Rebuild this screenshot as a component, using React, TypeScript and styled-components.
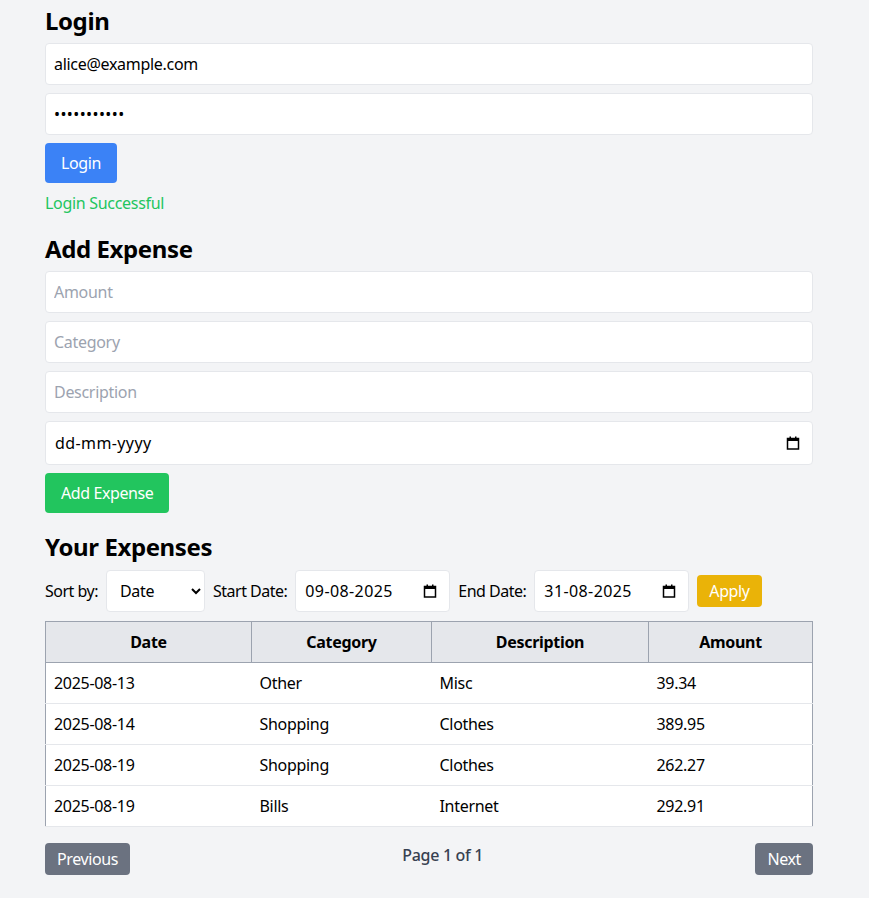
import React from "react";
import styled, { createGlobalStyle } from "styled-components";

const GlobalStyle = createGlobalStyle`
  * { box-sizing: border-box; }
  body {
    margin: 0;
    background: #f3f4f6;
    font-family: "Segoe UI", "Noto Sans", "Open Sans", sans-serif;
    letter-spacing: -0.3px;
    color: #000;
  }
`;

const Page = styled.div`
  width: 768px;
  margin: 0 0 0 45px;
  padding: 3px 0 23px;
  display: flex;
  flex-direction: column;
  gap: 16px;
`;

const Section = styled.section`
  display: flex;
  flex-direction: column;
`;

const Heading = styled.h2`
  margin: 0 0 6px;
  padding-top: 2px;
  font-size: 24px;
  line-height: 32px;
  font-weight: 700;
  letter-spacing: -0.4px;
`;

const Stack = styled.div`
  display: flex;
  flex-direction: column;
  gap: 8px;
`;

const TextInput = styled.input`
  width: 100%;
  height: 42px;
  padding: 8px;
  font: inherit;
  font-size: 16px;
  line-height: 24px;
  letter-spacing: -0.3px;
  border: 1px solid #e5e7eb;
  border-radius: 4px;
  background: #fff;
  color: #000;
  outline: none;
  &::placeholder { color: #9ca3af; }
  &[type="password"] { letter-spacing: 0.4px; }
`;

const DateBox = styled.label<{ $w?: number; $h?: number }>`
  display: flex;
  align-items: center;
  width: ${(p) => (p.$w ? `${p.$w}px` : "100%")};
  height: ${(p) => p.$h ?? 44}px;
  padding: 0 12px 0 9px;
  border: 1px solid #e5e7eb;
  border-radius: 4px;
  background: #fff;
  flex-shrink: 0;
`;

const DateText = styled.input`
  flex: 1;
  min-width: 0;
  border: none;
  outline: none;
  padding: 0;
  font: inherit;
  font-size: 16px;
  letter-spacing: 0.4px;
  color: #000;
  background: transparent;
`;

const Button = styled.button<{ $bg: string; $px?: number; $py?: number }>`
  align-self: flex-start;
  background: ${(p) => p.$bg};
  color: #fff;
  border: none;
  border-radius: 4px;
  padding: ${(p) => p.$py ?? 8}px ${(p) => p.$px ?? 16}px;
  font: inherit;
  font-size: 16px;
  line-height: 24px;
  letter-spacing: -0.4px;
  cursor: pointer;
`;

const Message = styled.p`
  margin: 8px 0 0;
  color: #22c55e;
  font-size: 16px;
  line-height: 24px;
`;

const FilterRow = styled.div`
  display: flex;
  align-items: center;
  gap: 8px;
  margin-bottom: 8px;
  height: 44px;
`;

const Label = styled.span`
  font-size: 16px;
  line-height: 24px;
  letter-spacing: -0.5px;
  white-space: nowrap;
`;

const Select = styled.select`
  width: 99px;
  height: 42px;
  padding: 8px 8px 8px 9px;
  font: inherit;
  font-size: 16px;
  letter-spacing: -0.3px;
  border: 1px solid #e5e7eb;
  border-radius: 4px;
  background: #fff;
  color: #000;
  outline: none;
`;

const Table = styled.table`
  width: 767px;
  table-layout: fixed;
  border-collapse: collapse;
  border: 1px solid #9ca3af;
  background: #fff;
  font-size: 16px;
  line-height: 24px;
`;

const Th = styled.th`
  background: #e5e7eb;
  border: 1px solid #9ca3af;
  padding: 8px;
  font-weight: 700;
  text-align: center;
`;

const Tr = styled.tr`
  border-bottom: 1px solid #e5e7eb;
`;

const Td = styled.td`
  padding: 8px;
  text-align: left;
`;

const Pagination = styled.div`
  display: flex;
  justify-content: space-between;
  margin-top: 16px;
`;

const PageInfo = styled.span`
  color: #374151;
  font-weight: 500;
  font-size: 16px;
  line-height: 24px;
`;

const CalendarIcon = () => (
  <svg width="14" height="14" viewBox="0 0 14 14" aria-hidden="true">
    <rect x="1.5" y="2.5" width="11" height="10.5" fill="none" stroke="#000" strokeWidth="1.5" />
    <rect x="1.5" y="2.5" width="11" height="2.5" fill="#000" />
    <rect x="3.5" y="0.5" width="1.5" height="2.5" fill="#000" />
    <rect x="9" y="0.5" width="1.5" height="2.5" fill="#000" />
  </svg>
);

const DateField = ({ value, w, h }: { value: string; w?: number; h?: number }) => (
  <DateBox $w={w} $h={h}>
    <DateText type="text" defaultValue={value} readOnly />
    <CalendarIcon />
  </DateBox>
);

const expenses = [
  { date: "2025-08-13", category: "Other", description: "Misc", amount: "39.34" },
  { date: "2025-08-14", category: "Shopping", description: "Clothes", amount: "389.95" },
  { date: "2025-08-19", category: "Shopping", description: "Clothes", amount: "262.27" },
  { date: "2025-08-19", category: "Bills", description: "Internet", amount: "292.91" },
];

export default function App() {
  return (
    <>
      <GlobalStyle />
      <Page>
        <Section>
          <Heading>Login</Heading>
          <Stack>
            <TextInput type="email" defaultValue="alice@example.com" />
            <TextInput type="password" defaultValue="password123" />
            <Button $bg="#3b82f6">Login</Button>
          </Stack>
          <Message>Login Successful</Message>
        </Section>

        <Section>
          <Heading>Add Expense</Heading>
          <Stack>
            <TextInput placeholder="Amount" />
            <TextInput placeholder="Category" />
            <TextInput placeholder="Description" />
            <DateField value="dd-mm-yyyy" />
            <Button $bg="#22c55e">Add Expense</Button>
          </Stack>
        </Section>

        <Section>
          <Heading>Your Expenses</Heading>
          <FilterRow>
            <Label>Sort by:</Label>
            <Select defaultValue="date">
              <option value="date">Date</option>
              <option value="amount">Amount</option>
              <option value="category">Category</option>
            </Select>
            <Label>Start Date:</Label>
            <DateField value="09-08-2025" w={155} h={42} />
            <Label>End Date:</Label>
            <DateField value="31-08-2025" w={155} h={42} />
            <Button $bg="#eab308" $px={12} $py={4} style={{ alignSelf: "center" }}>
              Apply
            </Button>
          </FilterRow>
          <Table>
            <colgroup>
              <col style={{ width: 206 }} />
              <col style={{ width: 180 }} />
              <col style={{ width: 217 }} />
              <col style={{ width: 164 }} />
            </colgroup>
            <thead>
              <tr>
                <Th>Date</Th>
                <Th>Category</Th>
                <Th>Description</Th>
                <Th>Amount</Th>
              </tr>
            </thead>
            <tbody>
              {expenses.map((e, i) => (
                <Tr key={i}>
                  <Td>{e.date}</Td>
                  <Td>{e.category}</Td>
                  <Td>{e.description}</Td>
                  <Td>{e.amount}</Td>
                </Tr>
              ))}
            </tbody>
          </Table>
          <Pagination>
            <Button $bg="#6b7280" $px={12} $py={4}>Previous</Button>
            <PageInfo>Page 1 of 1</PageInfo>
            <Button $bg="#6b7280" $px={12} $py={4}>Next</Button>
          </Pagination>
        </Section>
      </Page>
    </>
  );
}
